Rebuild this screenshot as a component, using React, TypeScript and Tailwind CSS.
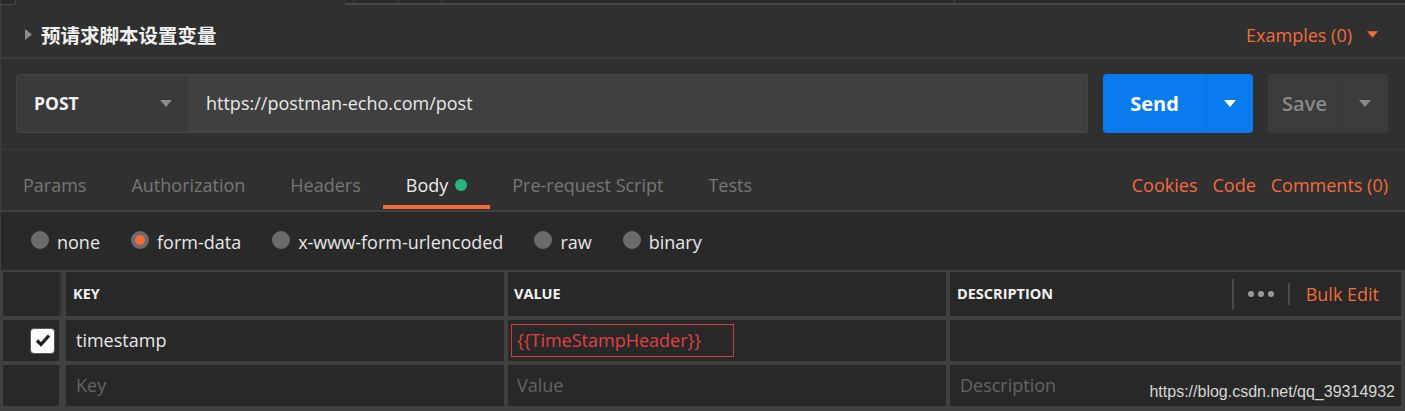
import React from 'react'

const Caret = ({ className }: { className: string }) => (
  <svg width="12" height="7" viewBox="0 0 12 7" className={className}>
    <path d="M0 0h12L6 7z" fill="currentColor" />
  </svg>
)

const tabs = [
  { name: 'Params' },
  { name: 'Authorization' },
  { name: 'Headers' },
  { name: 'Body', active: true },
  { name: 'Pre-request Script' },
  { name: 'Tests' },
]

const radios = [
  { label: 'none' },
  { label: 'form-data', on: true },
  { label: 'x-www-form-urlencoded' },
  { label: 'raw' },
  { label: 'binary' },
]

export default function App() {
  return (
    <div className="relative w-[1405px] h-[411px] overflow-hidden bg-[#303030] border-l border-[#3e3e3e] font-['Open_Sans',sans-serif]">
      {/*===== bottoms of the tabs above =====*/}
      <div className="flex h-[5px]">
        <div className="w-[15px] border-r border-b border-[#474747] rounded-br-[3px] bg-[#2a2a2a]" />
        <div className="w-[329px]" />
        <div className="flex flex-1 border-b-2 border-[#474747] bg-[#2a2a2a]">
          <div className="w-[8px] border-l border-[#474747] rounded-bl-[3px]" />
          <div className="w-[45px] border-l border-[#474747]" />
          <div className="w-[43px] border-l border-[#474747]" />
          <div className="w-[514px] border-x border-[#474747]" />
        </div>
      </div>

      {/*===== request name =====*/}
      <div className="flex h-[54px] items-center justify-between pl-[24px] pr-[27px] pt-[7px] border-b-2 border-[#3b3b3b]">
        <div className="flex items-center gap-[9px]">
          <svg width="7" height="11" viewBox="0 0 7 11">
            <path d="M0 0l7 5.5L0 11z" fill="#8a8a8a" />
          </svg>
          <span className="text-[19.5px] leading-[24px] font-bold text-[#f0f0f0] font-['Noto_Sans_CJK_SC',sans-serif]">
            预请求脚本设置变量
          </span>
        </div>
        <div className="flex items-center gap-[15px] text-[#f26b3a]">
          <span className="text-[18px] leading-[24px]">Examples (0)</span>
          <Caret className="w-[11px] h-[7px]" />
        </div>
      </div>

      {/*===== url bar =====*/}
      <div className="pt-[15px] pb-[16px] pl-[15px] pr-[17px] border-b border-[#3a3a3a]">
        <div className="flex h-[59px]">
          <div className="flex w-[174px] items-center justify-between pl-[17px] pr-[17px] bg-[#3a3a3a] border border-[#444444] rounded-l-[4px]">
            <span className="text-[17.5px] font-bold text-[#f0f0f0]">POST</span>
            <Caret className="text-[#8b8b8b]" />
          </div>
          <div className="flex flex-1 items-center pl-[16px] bg-[#404040] border-y border-r border-[#454545] rounded-r-[3px]">
            <span className="text-[18px] text-[#e8e8e8]">https://postman-echo.com/post</span>
          </div>
          <div className="flex w-[150px] ml-[15px] rounded-[4px] bg-[#097bed]">
            <div className="flex w-[104px] items-center justify-center border-r border-[#0a6ed4] text-[20px] font-bold text-white">
              Send
            </div>
            <div className="flex flex-1 items-center justify-center">
              <Caret className="text-white" />
            </div>
          </div>
          <div className="flex w-[120px] ml-[15px] rounded-[4px] bg-[#3b3b3b]">
            <div className="flex w-[74px] items-center justify-center border-r border-[#363636] text-[20px] font-semibold text-[#8a8a8a]">
              Save
            </div>
            <div className="flex flex-1 items-center justify-center">
              <Caret className="text-[#8a8a8a]" />
            </div>
          </div>
        </div>
      </div>

      {/*===== request tabs =====*/}
      <div className="flex h-[62px] items-stretch justify-between pr-[17px] border-b-2 border-[#404040]">
        <div className="flex -ml-[0.5px]">
          {tabs.map((t) => (
            <div key={t.name} className="flex flex-col justify-end px-[22.5px] pb-[1px]">
              <div className={`flex items-center gap-[7px] mb-[8px] text-[18px] leading-[24px] ${t.active ? 'text-[#ececec]' : 'text-[#767676]'}`}>
                {t.name}
                {t.active && <span className="w-[12px] h-[12px] rounded-full bg-[#26b47f]" />}
              </div>
              <div className={`h-[4px] -mx-[22.5px] ${t.active ? 'bg-[#f26b3a]' : ''}`} />
            </div>
          ))}
        </div>
        <div className="flex items-end gap-[15px] pb-[13px] text-[18px] leading-[24px] text-[#f26b3a]">
          <span>Cookies</span>
          <span>Code</span>
          <span>Comments (0)</span>
        </div>
      </div>

      {/*===== body types =====*/}
      <div className="flex h-[58px] items-center gap-[31px] pl-[30px] pt-[2px] bg-[#292929]">
        {radios.map((r) => (
          <div key={r.label} className="flex items-center gap-[8px]">
            <span className="flex w-[18px] h-[18px] mb-[4px] items-center justify-center rounded-full bg-[#6b6b6b]">
              {r.on && <span className="w-[10px] h-[10px] rounded-full bg-[#f26b3a]" />}
            </span>
            <span className="text-[18px] leading-[24px] text-[#e6e6e6]">{r.label}</span>
          </div>
        ))}
      </div>

      {/*===== form-data table =====*/}
      <div className="bg-[#404040] pt-[2px] pl-[2px] pr-[4px] pb-[5px]">
        <div className="grid grid-cols-[59px_438px_438px_451px] grid-rows-[44px_41px_41px] gap-[4px]">
          <div className="bg-[#282828] border-r-[3px] border-[#343434]" />
          <div className="flex items-center pl-[7px] bg-[#282828] text-[14.5px] font-bold text-[#f2f2f2]">KEY</div>
          <div className="flex items-center pl-[6px] bg-[#282828] text-[14.5px] font-bold text-[#f2f2f2]">VALUE</div>
          <div className="flex items-center pl-[7px] bg-[#282828]">
            <span className="flex-1 text-[14.5px] font-bold text-[#f2f2f2]">DESCRIPTION</span>
            <span className="w-[2px] h-[31px] bg-[#4a4a4a]" />
            <span className="flex gap-[4px] px-[14px]">
              <span className="w-[6px] h-[6px] rounded-full bg-[#9a9a9a]" />
              <span className="w-[6px] h-[6px] rounded-full bg-[#9a9a9a]" />
              <span className="w-[6px] h-[6px] rounded-full bg-[#9a9a9a]" />
            </span>
            <span className="w-[2px] h-[22px] bg-[#4a4a4a]" />
            <span className="pl-[16px] pr-[22px] text-[18px] text-[#f26b3a]">Bulk Edit</span>
          </div>

          <div className="flex items-center justify-end pr-[4px] bg-[#282828] border-r-[3px] border-[#404040]">
            <span className="flex w-[25px] h-[26px] items-center justify-center rounded-[4px] bg-white border border-[#5a5a5a]">
              <svg width="16" height="13" viewBox="0 0 16 13">
                <path d="M2 6.5l4 4 8-9" fill="none" stroke="#1e1e1e" strokeWidth="3.2" />
              </svg>
            </span>
          </div>
          <div className="flex items-center pl-[10px] bg-[#282828] text-[18px] text-[#e8e8e8]">timestamp</div>
          <div className="flex items-center pl-[3px] bg-[#282828]">
            <span className="flex w-[223px] h-[33px] items-center pl-[5px] border border-[#d03c3c] text-[18px] text-[#e0403e]">
              {'{{TimeStampHeader}}'}
            </span>
          </div>
          <div className="bg-[#282828]" />

          <div className="bg-[#282828] border-r-[3px] border-[#404040]" />
          <div className="flex items-center pl-[10px] bg-[#282828] text-[18px] text-[#646464]">Key</div>
          <div className="flex items-center pl-[9px] bg-[#282828] text-[18px] text-[#646464]">Value</div>
          <div className="flex items-center pl-[10px] bg-[#282828] text-[18px] text-[#646464]">Description</div>
        </div>
      </div>

      {/* blog watermark over the table */}
      <span className="absolute right-[10px] bottom-[9px] text-[16px] leading-[20px] text-[#d6d6d6] font-['Liberation_Sans',sans-serif]">
        https://blog.csdn.net/qq_39314932
      </span>
    </div>
  )
}
